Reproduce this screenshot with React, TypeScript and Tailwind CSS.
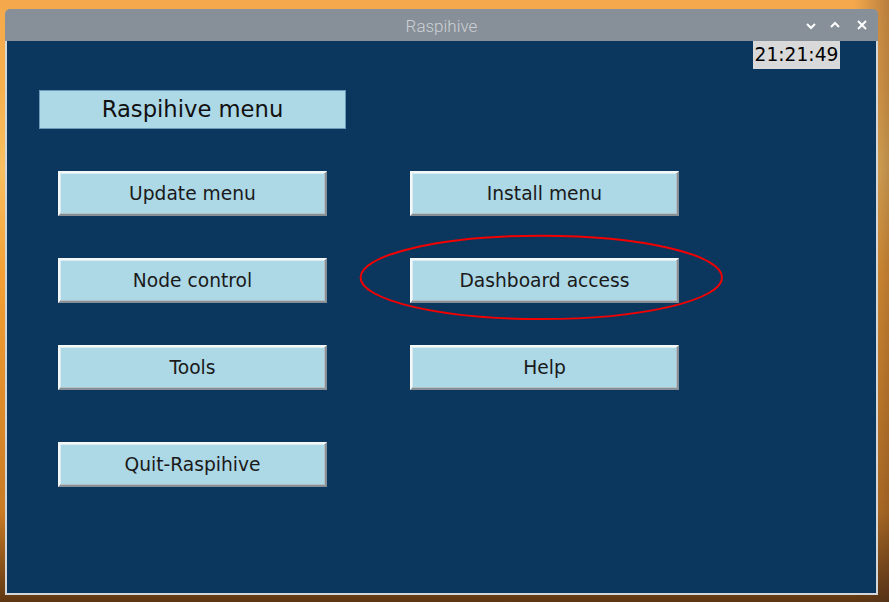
import React from "react";

const btn =
  "w-[269px] h-[45px] pt-[2px] flex items-center justify-center bg-[#add8e6] border-2 border-t-[#f4f8f9] border-l-[#f4f8f9] border-b-[#858f95] border-r-[#858f95] shadow-[inset_-1px_-1px_0_#b4c0c6,inset_1px_1px_0_#d8ecf2] text-[18.67px] text-[#1a1a1a] font-['DejaVu_Sans',sans-serif] leading-none";

export default function App() {
  return (
    <div className="w-[889px] h-[602px] overflow-hidden pt-[9px] pl-[5px] bg-[linear-gradient(to_right,rgba(0,0,0,0)_0%,rgba(0,0,0,0)_96%,rgba(70,45,35,0.35)_100%),linear-gradient(to_bottom,#f5a94c_0%,#f7b04e_15%,#f9c060_28%,#f5a136_45%,#e08e2c_65%,#c97b24_85%,#5e3612_100%)]">
      <div className="w-[873px] flex flex-col">
        <div className="h-[32px] pt-[2px] bg-[#878f98] rounded-t-[5px] relative flex items-center justify-center">
          <span className="font-['Roboto',sans-serif] font-light text-[17px] text-[#cdd1d5] leading-none">
            Raspihive
          </span>
          <div className="absolute right-0 top-0 h-full">
            <svg width="12" height="10" viewBox="0 0 12 10" className="absolute left-[-73px] top-[12px]">
              <path d="M2 3 L6 7 L10 3" stroke="#ffffff" strokeWidth="2" fill="none" />
            </svg>
            <svg width="12" height="10" viewBox="0 0 12 10" className="absolute left-[-49px] top-[11px]">
              <path d="M2 7 L6 3 L10 7" stroke="#ffffff" strokeWidth="2" fill="none" />
            </svg>
            <svg width="12" height="12" viewBox="0 0 12 12" className="absolute left-[-22px] top-[10px]">
              <path d="M2 2 L10 10 M10 2 L2 10" stroke="#ffffff" strokeWidth="2" fill="none" />
            </svg>
          </div>
        </div>
        <div className="h-[554px] border-x-2 border-b-2 border-[#d3d7da] bg-[#0b365e] relative flex flex-col">
          <div className="ml-[746px] w-[87px] h-[28px] pt-[1px] bg-[#d9d9d9] flex items-center justify-center font-['DejaVu_Sans',sans-serif] text-[18.67px] text-black leading-none">
            21:21:49
          </div>
          <div className="mt-[21px] ml-[32px] w-[307px] h-[39px] bg-[#add8e6] border border-[#6c9ab8] flex items-center justify-center font-['DejaVu_Sans',sans-serif] text-[22.67px] text-[#111] leading-none">
            Raspihive menu
          </div>
          <div className="mt-[42px] ml-[51px] grid grid-cols-[269px_269px] gap-x-[83px] gap-y-[42px]">
            <div className={btn}>Update menu</div>
            <div className={btn}>Install menu</div>
            <div className={btn}>Node control</div>
            <div className={btn}>Dashboard access</div>
            <div className={btn}>Tools</div>
            <div className={btn}>Help</div>
          </div>
          <div className="mt-[52px] ml-[51px]">
            <div className={btn}>Quit-Raspihive</div>
          </div>
          <svg
            className="absolute left-0 top-0 pointer-events-none"
            width="869"
            height="552"
            viewBox="0 0 869 552"
          >
            <ellipse cx="534.3" cy="236.4" rx="180.7" ry="41.7" stroke="#f20000" strokeWidth="2" fill="none" />
          </svg>
        </div>
      </div>
    </div>
  );
}
